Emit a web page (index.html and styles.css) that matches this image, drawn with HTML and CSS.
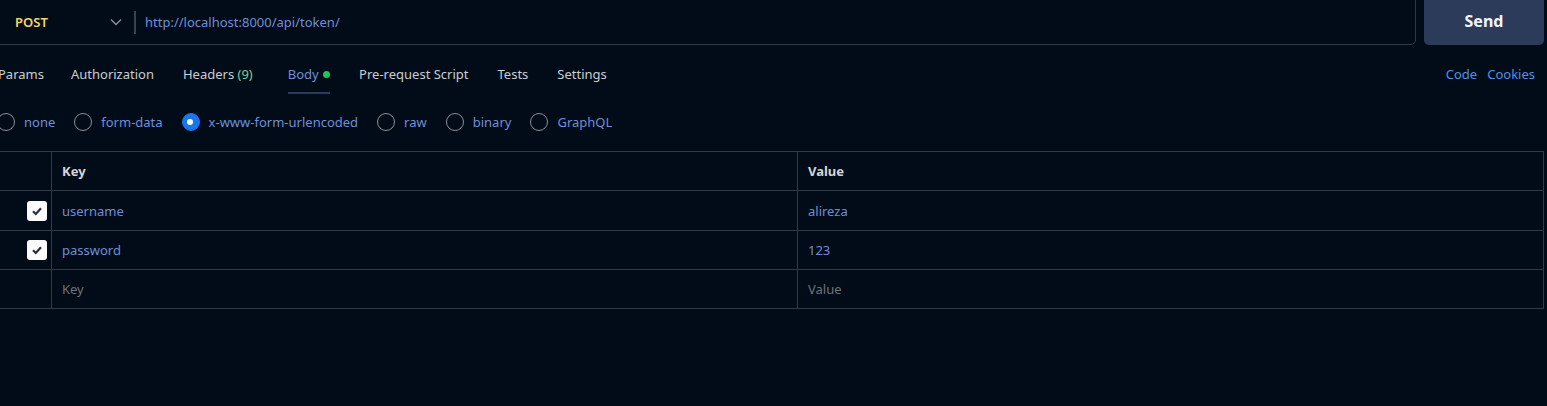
FILE: index.html
```html
<!DOCTYPE html>
<html>
<head>
<meta charset="utf-8">
<link rel="stylesheet" href="styles.css">
</head>
<body>
<div class="page">
  <div class="topbar">
    <div class="urlbox">
      <div class="method">
        <span class="method-name">POST</span>
        <svg class="chev" width="12" height="8" viewBox="0 0 12 8"><path d="M1 1.5 L6 6.5 L11 1.5" fill="none" stroke="#8a929c" stroke-width="1.4"/></svg>
      </div>
      <div class="vdiv"></div>
      <span class="url">http://localhost:8000/api/token/</span>
    </div>
    <button class="send">Send</button>
  </div>

  <div class="tabs">
    <div class="tablist">
      <span class="tab first">Params</span>
      <span class="tab">Authorization</span>
      <span class="tab">Headers <span class="count">(9)</span></span>
      <span class="tab active">Body <span class="dot"></span></span>
      <span class="tab">Pre-request Script</span>
      <span class="tab">Tests</span>
      <span class="tab">Settings</span>
    </div>
    <div class="links">
      <span class="link">Code</span>
      <span class="link">Cookies</span>
    </div>
  </div>

  <div class="radios">
    <label class="radio"><span class="circle"></span><span class="rlabel">none</span></label>
    <label class="radio"><span class="circle"></span><span class="rlabel">form-data</span></label>
    <label class="radio"><span class="circle on"></span><span class="rlabel">x-www-form-urlencoded</span></label>
    <label class="radio"><span class="circle"></span><span class="rlabel">raw</span></label>
    <label class="radio"><span class="circle"></span><span class="rlabel">binary</span></label>
    <label class="radio"><span class="circle"></span><span class="rlabel">GraphQL</span></label>
  </div>

  <div class="table">
    <div class="row head">
      <div class="cell c0"></div>
      <div class="cell c1">Key</div>
      <div class="cell c2">Value</div>
    </div>
    <div class="row tall">
      <div class="cell c0"><span class="check"><svg width="12" height="10" viewBox="0 0 12 10"><path d="M2 5.2 L4.8 8 L10 2.2" fill="none" stroke="#2b2f36" stroke-width="2.2"/></svg></span></div>
      <div class="cell c1 val">username</div>
      <div class="cell c2 val">alireza</div>
    </div>
    <div class="row">
      <div class="cell c0"><span class="check"><svg width="12" height="10" viewBox="0 0 12 10"><path d="M2 5.2 L4.8 8 L10 2.2" fill="none" stroke="#2b2f36" stroke-width="2.2"/></svg></span></div>
      <div class="cell c1 val">password</div>
      <div class="cell c2 val">123</div>
    </div>
    <div class="row">
      <div class="cell c0"></div>
      <div class="cell c1 ph">Key</div>
      <div class="cell c2 ph">Value</div>
    </div>
  </div>
</div>
</body>
</html>
```

FILE: styles.css
```css
html, body {
  margin: 0;
  padding: 0;
  background: #020c18;
  height: 100%;
  overflow: hidden;
}
body {
  font-family: "Noto Sans", "Open Sans", sans-serif;
  font-size: 13px;
  color: #c9cdd3;
}
.page {
  margin: -1px 3px 0 -10px;
}
.topbar {
  display: flex;
  gap: 8px;
  height: 46px;
}
.urlbox {
  flex: 1;
  display: flex;
  align-items: center;
  border: 1px solid #2e3944;
  border-radius: 0 0 5px 0;
}
.method {
  display: flex;
  align-items: center;
  width: 107px;
  padding-left: 24px;
  box-sizing: content-box;
}
.method-name {
  flex: 1;
  color: #f6d36b;
  font-weight: 600;
}
.chev {
  display: block;
}
.vdiv {
  width: 2px;
  height: 23px;
  background: #3a434d;
  margin-left: 12px;
  margin-right: 9px;
}
.url {
  color: #6e8fd6;
}
.send {
  width: 120px;
  border: none;
  border-radius: 0 0 5px 5px;
  background: #2c3b5a;
  color: #f2f4f7;
  font-family: inherit;
  font-size: 16px;
  font-weight: 700;
  padding: 0 0 2px;
}
.tabs {
  display: flex;
  justify-content: space-between;
  align-items: flex-start;
  margin-top: 20px;
  height: 30px;
}
.tablist {
  display: flex;
  gap: 29px;
  padding-left: 8px;
}
.tab {
  height: 29px;
  line-height: 18px;
  box-sizing: border-box;
  white-space: nowrap;
}
.tab.first {
  margin-right: -2px;
}
.tab .count {
  color: #6fd39a;
}
.tab.active {
  color: #6e8fd6;
  border-bottom: 2px solid #2b3a58;
  margin-left: 6px;
}
.dot {
  display: inline-block;
  width: 7px;
  height: 7px;
  border-radius: 50%;
  background: #1fc25b;
  vertical-align: 1px;
  margin-left: 1px;
}
.links {
  display: flex;
  gap: 10px;
  padding-right: 9px;
  line-height: 18px;
}
.link {
  color: #4f93e6;
}
.radios {
  display: flex;
  align-items: center;
  margin-top: 18px;
  height: 18px;
  padding-left: 7px;
}
.radio {
  display: flex;
  align-items: center;
  margin-right: 19px;
}
.circle {
  width: 18px;
  height: 18px;
  border: 1.5px solid #8c8f94;
  border-radius: 50%;
  margin-right: 9px;
  box-sizing: border-box;
}
.circle.on {
  border-color: #1677ee;
  background: #1677ee;
  position: relative;
}
.circle.on::after {
  content: "";
  position: absolute;
  left: 4.5px;
  top: 4.5px;
  width: 6px;
  height: 6px;
  border-radius: 50%;
  background: #fff;
}
.rlabel {
  color: #6e8fd6;
}
.table {
  margin-top: 20px;
  border: 1px solid #303b46;
}
.row {
  display: flex;
  height: 38px;
  border-top: 1px solid #303b46;
}
.row.head {
  border-top: none;
}
.row.tall {
  height: 39px;
}
.cell {
  display: flex;
  align-items: center;
  box-sizing: border-box;
}
.c0 {
  width: 61px;
  justify-content: flex-end;
  padding-right: 4px;
  border-right: 1px solid #303b46;
}
.c1 {
  width: 746px;
  padding-left: 10px;
  border-right: 1px solid #303b46;
}
.c2 {
  flex: 1;
  padding-left: 10px;
}
.head .cell {
  font-weight: 700;
  color: #d3d6da;
}
.val {
  color: #6e8fd6;
}
.ph {
  color: #6c737b;
}
.check {
  width: 20px;
  height: 20px;
  background: #fbfbfc;
  border-radius: 3px;
  display: flex;
  align-items: center;
  justify-content: center;
}
```
